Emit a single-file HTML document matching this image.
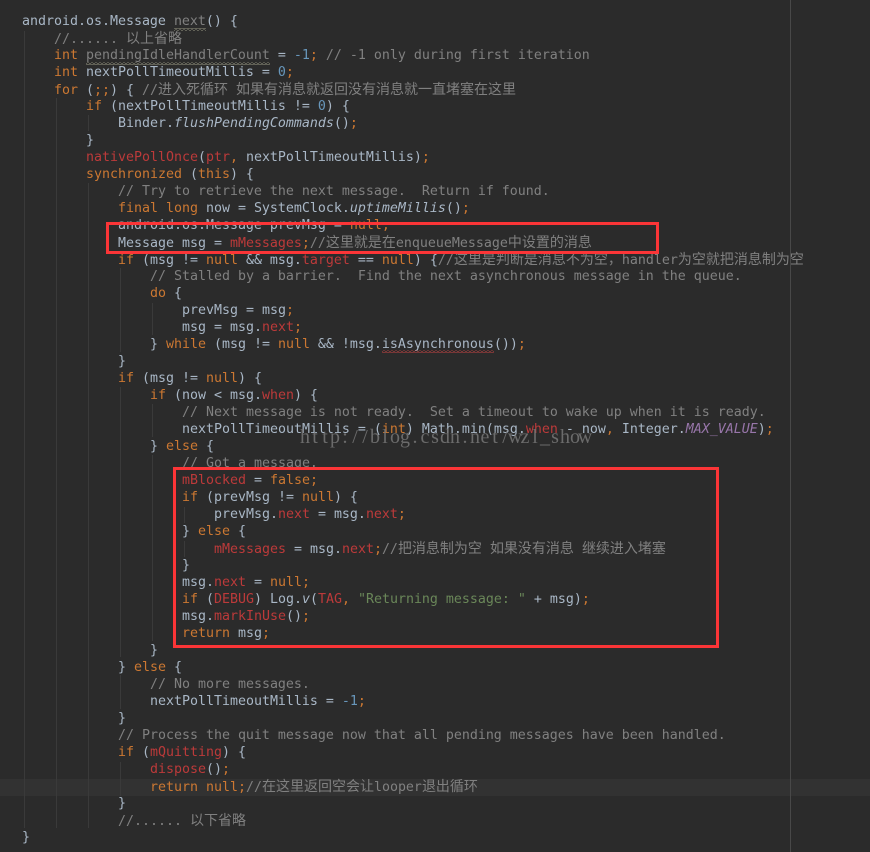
<!DOCTYPE html>
<html><head><meta charset="utf-8">
<style>
html,body{margin:0;padding:0;background:#2b2b2b}
#p{position:relative;width:870px;height:852px;overflow:hidden;background:#2b2b2b;font-family:"DejaVu Sans Mono","Liberation Mono","Noto Sans CJK SC",monospace;font-size:13.29px;color:#a9b7c6}
.l{position:absolute;white-space:pre;height:17px;line-height:17px;margin-top:1px}
.k{color:#cc7832}.c{color:#808080}.r{color:#bc3a3a}.n{color:#6897bb}.s{color:#6a8759}.p{color:#9876aa;font-style:italic}.i{font-style:italic}.u{color:#808080}
.z{font-family:"Noto Sans CJK SC",sans-serif;font-size:14px;line-height:17px}
.g{position:absolute;width:1px;background:#3a3a3a}
.b{position:absolute;border:3px solid #fb3537;box-sizing:border-box}
</style></head><body><div id="p">
<div style="position:absolute;left:0;top:779px;width:870px;height:17px;background:#323232"></div>
<div style="position:absolute;left:790px;top:0;width:1px;height:852px;background:#484848"></div>
<div class="g" style="left:24px;top:31px;height:797px"></div>
<div class="g" style="left:56px;top:98px;height:730px"></div>
<div class="g" style="left:88px;top:115px;height:16px"></div>
<div class="g" style="left:88px;top:183px;height:645px"></div>
<div class="g" style="left:120px;top:268px;height:84px"></div>
<div class="g" style="left:120px;top:387px;height:270px"></div>
<div class="g" style="left:120px;top:675px;height:34px"></div>
<div class="g" style="left:120px;top:762px;height:34px"></div>
<div class="g" style="left:152px;top:303px;height:32px"></div>
<div class="g" style="left:152px;top:404px;height:33px"></div>
<div class="g" style="left:152px;top:455px;height:186px"></div>
<div class="g" style="left:184px;top:507px;height:16px"></div>
<div class="g" style="left:184px;top:541px;height:16px"></div>

<div class="l" style="left:22px;top:12px">android.os.Message <span class="u">next</span>() {</div>
<div class="l c" style="left:54px;top:29px">//...... <span class="z">以上省略</span></div>
<div class="l" style="left:54px;top:46px"><span class="k">int</span> <span class="u">pendingIdleHandlerCount</span> = <span class="n">-1</span><span class="k">;</span> <span class="c">// -1 only during first iteration</span></div>
<div class="l" style="left:54px;top:63px"><span class="k">int</span> nextPollTimeoutMillis = <span class="n">0</span><span class="k">;</span></div>
<div class="l" style="left:54px;top:80px"><span class="k">for</span> (<span class="k">;;</span>) { <span class="c">//<span class="z">进入死循环</span> <span class="z">如果有消息就返回没有消息就一直堵塞在这里</span></span></div>
<div class="l" style="left:86px;top:97px"><span class="k">if</span> (nextPollTimeoutMillis != <span class="n">0</span>) {</div>
<div class="l" style="left:118px;top:114px">Binder.<span class="i">flushPendingCommands</span>()<span class="k">;</span></div>
<div class="l" style="left:86px;top:131px">}</div>
<div class="l" style="left:86px;top:148px"><span class="r">nativePollOnce</span>(<span class="r">ptr</span><span class="k">,</span> nextPollTimeoutMillis)<span class="k">;</span></div>
<div class="l" style="left:86px;top:165px"><span class="k">synchronized</span> (<span class="k">this</span>) {</div>
<div class="l c" style="left:118px;top:182px">// Try to retrieve the next message.  Return if found.</div>
<div class="l" style="left:118px;top:199px"><span class="k">final long</span> now = SystemClock.<span class="i">uptimeMillis</span>()<span class="k">;</span></div>
<div class="l" style="left:118px;top:216px">android.os.Message prevMsg = <span class="k">null;</span></div>
<div class="l" style="left:118px;top:233px">Message msg = <span class="r">mMessages</span><span class="k">;</span><span class="c">//<span class="z">这里就是在</span>enqueueMessage<span class="z">中设置的消息</span></span></div>
<div class="l" style="left:118px;top:250px"><span class="k">if</span> (msg != <span class="k">null</span> &amp;&amp; msg.<span class="r">target</span> == <span class="k">null</span>) {<span class="c">//<span class="z">这里是判断是消息不为空，</span>handler<span class="z">为空就把消息制为空</span></span></div>
<div class="l c" style="left:150px;top:267px">// Stalled by a barrier.  Find the next asynchronous message in the queue.</div>
<div class="l" style="left:150px;top:284px"><span class="k">do</span> {</div>
<div class="l" style="left:182px;top:301px">prevMsg = msg<span class="k">;</span></div>
<div class="l" style="left:182px;top:318px">msg = msg.<span class="r">next</span><span class="k">;</span></div>
<div class="l" style="left:150px;top:335px">} <span class="k">while</span> (msg != <span class="k">null</span> &amp;&amp; !msg.isAsynchronous())<span class="k">;</span></div>
<div class="l" style="left:118px;top:352px">}</div>
<div class="l" style="left:118px;top:369px"><span class="k">if</span> (msg != <span class="k">null</span>) {</div>
<div class="l" style="left:150px;top:386px"><span class="k">if</span> (now &lt; msg.<span class="r">when</span>) {</div>
<div class="l c" style="left:182px;top:403px">// Next message is not ready.  Set a timeout to wake up when it is ready.</div>
<div class="l" style="left:182px;top:420px">nextPollTimeoutMillis = (<span class="k">int</span>) Math.min(msg.<span class="r">when</span> - now<span class="k">,</span> Integer.<span class="p">MAX_VALUE</span>)<span class="k">;</span></div>
<div class="l" style="left:150px;top:437px">} <span class="k">else</span> {</div>
<div class="l c" style="left:182px;top:454px">// Got a message.</div>
<div class="l" style="left:182px;top:471px"><span class="r">mBlocked</span> = <span class="k">false;</span></div>
<div class="l" style="left:182px;top:488px"><span class="k">if</span> (prevMsg != <span class="k">null</span>) {</div>
<div class="l" style="left:214px;top:505px">prevMsg.<span class="r">next</span> = msg.<span class="r">next</span><span class="k">;</span></div>
<div class="l" style="left:182px;top:522px">} <span class="k">else</span> {</div>
<div class="l" style="left:214px;top:539px"><span class="r">mMessages</span> = msg.<span class="r">next</span><span class="k">;</span><span class="c">//<span class="z">把消息制为空</span> <span class="z">如果没有消息</span> <span class="z">继续进入堵塞</span></span></div>
<div class="l" style="left:182px;top:556px">}</div>
<div class="l" style="left:182px;top:573px">msg.<span class="r">next</span> = <span class="k">null;</span></div>
<div class="l" style="left:182px;top:590px"><span class="k">if</span> (<span class="r">DEBUG</span>) Log.<span class="i">v</span>(<span class="r">TAG</span><span class="k">,</span> <span class="s">"Returning message: "</span> + msg)<span class="k">;</span></div>
<div class="l" style="left:182px;top:607px">msg.<span class="r">markInUse</span>()<span class="k">;</span></div>
<div class="l" style="left:182px;top:624px"><span class="k">return</span> msg<span class="k">;</span></div>
<div class="l" style="left:150px;top:641px">}</div>
<div class="l" style="left:118px;top:658px">} <span class="k">else</span> {</div>
<div class="l c" style="left:150px;top:675px">// No more messages.</div>
<div class="l" style="left:150px;top:692px">nextPollTimeoutMillis = <span class="n">-1</span><span class="k">;</span></div>
<div class="l" style="left:118px;top:709px">}</div>
<div class="l c" style="left:118px;top:726px">// Process the quit message now that all pending messages have been handled.</div>
<div class="l" style="left:118px;top:743px"><span class="k">if</span> (<span class="r">mQuitting</span>) {</div>
<div class="l" style="left:150px;top:760px"><span class="r">dispose</span>()<span class="k">;</span></div>
<div class="l" style="left:150px;top:777px"><span class="k">return null;</span><span class="c">//<span class="z">在这里返回空会让</span>looper<span class="z">退出循环</span></span></div>
<div class="l" style="left:118px;top:794px">}</div>
<div class="l c" style="left:118px;top:811px">//...... <span class="z">以下省略</span></div>
<div class="l" style="left:22px;top:828px">}</div>

<svg style="position:absolute;left:0;top:0" width="870" height="852">
<defs>
<pattern id="wg" width="4" height="3" patternUnits="userSpaceOnUse"><path d="M0 2.5L2 .5L4 2.5" fill="none" stroke="#8a8a78" stroke-width=".8"/></pattern>
<pattern id="wr" width="4" height="3" patternUnits="userSpaceOnUse"><path d="M0 2.5L2 .5L4 2.5" fill="none" stroke="#b04040" stroke-width=".8"/></pattern>
</defs>
<rect x="174" y="28" width="32" height="3" fill="url(#wg)"/>
<rect x="86" y="62" width="184" height="3" fill="url(#wg)"/>
<rect x="382" y="350" width="112" height="3" fill="url(#wr)"/>
<text y="443" text-anchor="middle" x="305 315 325 335 345 355 365 375 385 395 405 415 425 435 445 455 465 475 485 495 505 515 525 535 545 555 565 575 585" font-family="Liberation Serif" font-size="20" fill="#777" fill-opacity=".85">http://blog.csdn.net/wzl_show</text>
</svg>

<div class="b" style="left:106px;top:222px;width:553px;height:32px"></div>
<div class="b" style="left:173px;top:467px;width:546px;height:181px"></div>
</div></body></html>
